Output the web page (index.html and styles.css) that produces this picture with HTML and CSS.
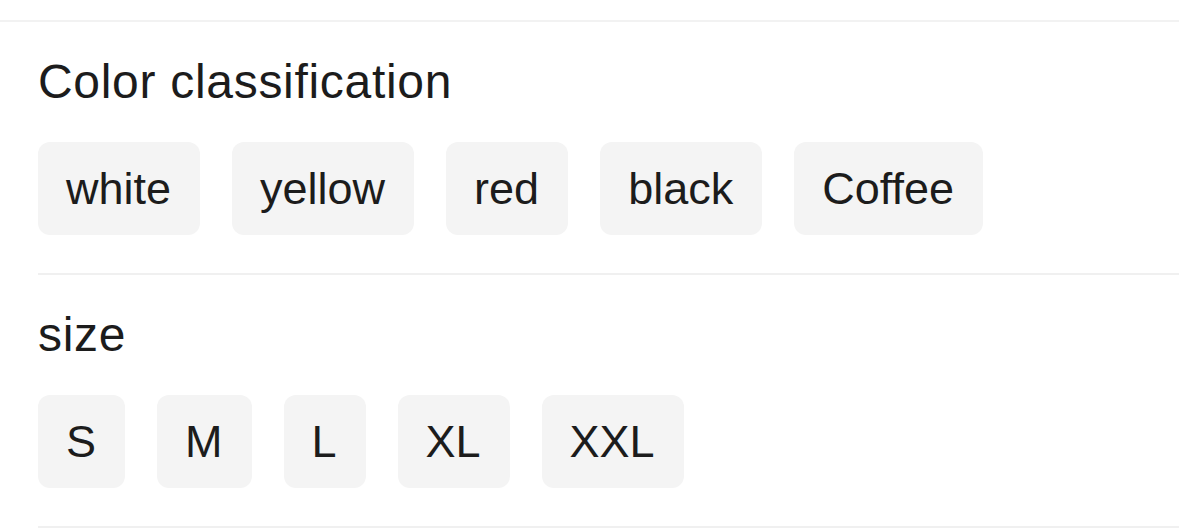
FILE: index.html
```html
<!DOCTYPE html>
<html lang="en">
<head>
    <meta charset="UTF-8">
    <meta name="viewport" content="width=device-width, initial-scale=1.0">
    <title>Product Options</title>
    <link rel="stylesheet" href="styles.css">
</head>
<body>
    <div class="sku-panel">
        <section class="sku-group">
            <h3 class="sku-title">Color classification</h3>
            <div class="sku-options">
                <span class="sku-chip">white</span>
                <span class="sku-chip">yellow</span>
                <span class="sku-chip">red</span>
                <span class="sku-chip">black</span>
                <span class="sku-chip">Coffee</span>
            </div>
        </section>

        <section class="sku-group">
            <h3 class="sku-title">size</h3>
            <div class="sku-options">
                <span class="sku-chip">S</span>
                <span class="sku-chip">M</span>
                <span class="sku-chip">L</span>
                <span class="sku-chip">XL</span>
                <span class="sku-chip">XXL</span>
            </div>
        </section>
    </div>
</body>
</html>
```

FILE: styles.css
```css
body {
    font-family: 'Liberation Sans', Arial, sans-serif;
    margin: 0;
    padding: 0;
    background-color: #fff;
    color: #1c1c1c;
}
.sku-panel {
    margin-top: 20px;
    border-top: 2px solid #f2f2f2;
}
.sku-group {
    margin-left: 38px;
    padding: 32px 0 38px;
    border-bottom: 2px solid #f0f0f0;
}
.sku-title {
    margin: 0 0 32px;
    font-size: 48px;
    line-height: 56px;
    font-weight: normal;
    letter-spacing: 0.7px;
}
.sku-options {
    display: flex;
    flex-wrap: wrap;
    gap: 32px;
}
.sku-chip {
    display: inline-block;
    height: 93px;
    line-height: 93px;
    padding: 0 29px 0 28px;
    background-color: #f4f4f4;
    border-radius: 12px;
    font-size: 45px;
}
```
